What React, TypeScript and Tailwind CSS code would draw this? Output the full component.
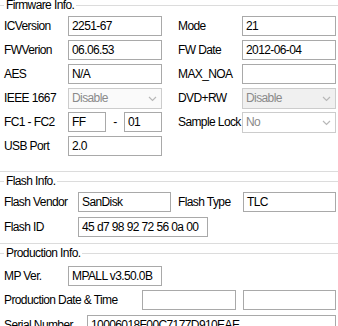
import React from 'react'

const font = { fontFamily: '"Liberation Sans", Arial, sans-serif' }

// Windows-forms style text box
function Box({ value = '', className = '' }: { value?: string; className?: string }) {
  return (
    <div
      className={`h-[20px] border border-[#a9a9a9] bg-white pl-[3px] leading-[18px] text-black overflow-hidden whitespace-nowrap ${className}`}
    >
      {value}
    </div>
  )
}

// disabled combo box
function Combo({ value, className = '' }: { value: string; className?: string }) {
  return (
    <div
      className={`h-[21px] border border-[#cccccc] pl-[3px] pr-[4px] flex items-center justify-between text-[#8a8a8a] ${className}`}
    >
      <span className="leading-[19px]">{value}</span>
      <svg width="9" height="6" viewBox="0 0 9 6" className="shrink-0">
        <polyline points="1,1 4.5,4.5 8,1" fill="none" stroke="#b8b8b8" strokeWidth="1.2" />
      </svg>
    </div>
  )
}

function Label({ text, className = '' }: { text: string; className?: string }) {
  return <div className={`leading-[20px] text-black whitespace-nowrap shrink-0 ${className}`}>{text}</div>
}

function GroupTitle({ text }: { text: string }) {
  return (
    <div className="-mt-[8px] ml-[4px] px-[2px] bg-white w-fit leading-[14px] text-black">{text}</div>
  )
}

export default function App() {
  return (
    <div
      className="w-[338px] h-[326px] overflow-hidden bg-white text-[12px] tracking-[-0.6px]"
      style={font}
    >
      {/* Firmware group */}
      <div className="mt-[5px] border-t border-b border-[#dcdcdc] pb-[11px]">
        <GroupTitle text="Firmware Info." />
        <div className="mt-[4px] flex flex-col">
          <div className="flex h-[24px]">
            <Label text="ICVersion" className="w-[68px] pl-[4px]" />
            <Box value="2251-67" className="w-[94px]" />
            <Label text="Mode" className="w-[80px] pl-[16px]" />
            <Box value="21" className="w-[94px]" />
          </div>
          <div className="flex h-[24px]">
            <Label text="FWVerion" className="w-[68px] pl-[4px]" />
            <Box value="06.06.53" className="w-[94px]" />
            <Label text="FW Date" className="w-[80px] pl-[16px]" />
            <Box value="2012-06-04" className="w-[94px]" />
          </div>
          <div className="flex h-[24px]">
            <Label text="AES" className="w-[68px] pl-[4px]" />
            <Box value="N/A" className="w-[94px]" />
            <Label text="MAX_NOA" className="w-[80px] pl-[16px]" />
            <Box className="w-[94px]" />
          </div>
          <div className="flex h-[24px]">
            <Label text="IEEE 1667" className="w-[68px] pl-[4px]" />
            <Combo value="Disable" className="w-[94px] bg-[#fafafa]" />
            <Label text="DVD+RW" className="w-[80px] pl-[16px]" />
            <Combo value="Disable" className="w-[94px] bg-[#f0f0f0]" />
          </div>
          <div className="flex h-[24px]">
            <Label text="FC1 - FC2" className="w-[68px] pl-[4px]" />
            <Box value="FF" className="w-[38px]" />
            <div className="w-[18px] text-center leading-[20px] text-black">-</div>
            <Box value="01" className="w-[38px]" />
            <Label text="Sample Lock" className="w-[80px] pl-[16px]" />
            <Combo value="No" className="w-[94px] bg-white" />
          </div>
          <div className="flex h-[24px]">
            <Label text="USB Port" className="w-[68px] pl-[4px]" />
            <Box value="2.0" className="w-[94px]" />
          </div>
        </div>
      </div>

      {/* Flash group */}
      <div className="mt-[9px] border-t border-b border-[#dcdcdc] pb-[3px]">
        <GroupTitle text="Flash Info." />
        <div className="mt-[4px] flex flex-col">
          <div className="flex h-[24px]">
            <Label text="Flash Vendor" className="w-[78px] pl-[4px]" />
            <Box value="SanDisk" className="w-[93px]" />
            <Label text="Flash Type" className="w-[72px] pl-[7px]" />
            <Box value="TLC" className="w-[93px]" />
          </div>
          <div className="flex h-[24px] pt-[1px]">
            <Label text="Flash ID" className="w-[78px] pl-[4px]" />
            <Box value="45 d7 98 92 72 56 0a 00" className="w-[130px]" />
          </div>
        </div>
      </div>

      {/* Production group */}
      <div className="mt-[9px] border-t border-[#dcdcdc]">
        <GroupTitle text="Production Info." />
        <div className="mt-[6px] flex flex-col">
          <div className="flex h-[24px]">
            <Label text="MP Ver." className="w-[68px] pl-[4px]" />
            <Box value="MPALL v3.50.0B" className="w-[94px]" />
          </div>
          <div className="flex h-[25px]">
            <Label text="Production Date & Time" className="w-[142px] pl-[4px]" />
            <Box className="w-[94px] h-[19px]" />
            <div className="w-[7px]" />
            <Box className="w-[93px] h-[19px]" />
          </div>
          <div className="flex h-[24px]">
            <Label text="Serial Number" className="w-[87px] pl-[4px]" />
            <Box value="10006018F00C7177D910EAE" className="w-[249px]" />
          </div>
        </div>
      </div>
    </div>
  )
}
